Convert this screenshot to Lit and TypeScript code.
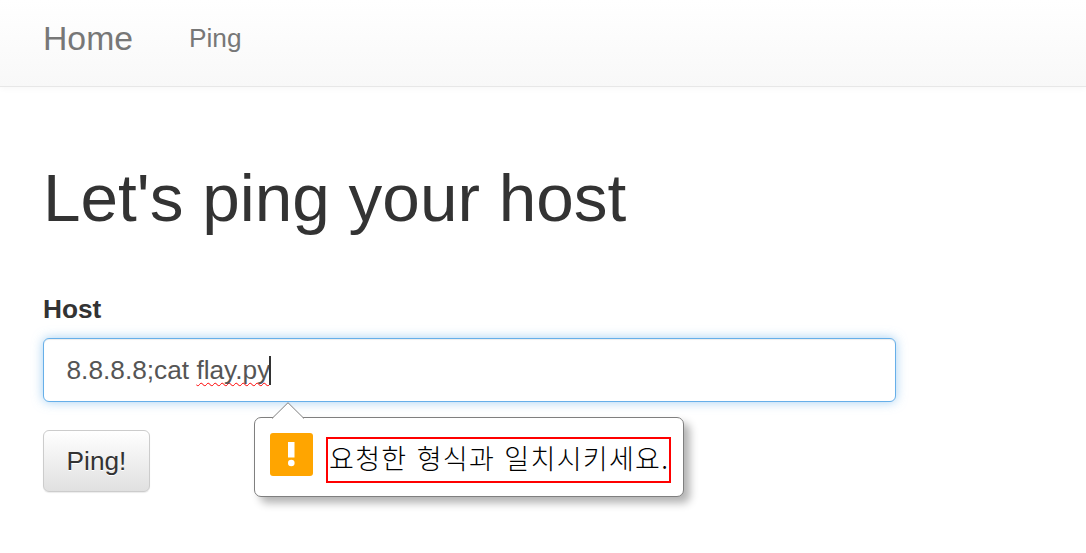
import { LitElement, html, css } from "lit";
import { customElement } from "lit/decorators.js";

@customElement("app-root")
export class AppRoot extends LitElement {
  static styles = css`
    :host {
      display: block;
      height: 553px;
      overflow: hidden;
      background: #fff;
      font-family: "Liberation Sans", Arial, sans-serif;
      color: #333;
    }
    .navbar {
      display: flex;
      align-items: center;
      box-sizing: border-box;
      height: 87px;
      padding: 0 0 10px 43px;
      background: linear-gradient(to bottom, #fff, #f8f8f8);
      border-bottom: 1px solid #e7e7e7;
      box-shadow: 0 1px 7px rgba(0, 0, 0, 0.04);
      color: #777;
    }
    .brand {
      font-size: 33.75px;
      margin-right: 56px;
    }
    .link {
      font-size: 26.25px;
    }
    .content {
      padding: 0 43px;
    }
    h1 {
      margin: 0;
      padding-top: 67px;
      font-size: 67.5px;
      line-height: 88px;
      font-weight: 400;
    }
    label {
      display: block;
      margin-top: 51px;
      font-size: 26.25px;
      line-height: 32px;
      font-weight: 700;
    }
    .field {
      position: relative;
      width: 853px;
      margin-top: 13px;
    }
    .input {
      box-sizing: border-box;
      height: 64px;
      padding: 0 23px 0 22.5px;
      display: flex;
      align-items: center;
      background: #fff;
      border: 1px solid #66afe9;
      border-radius: 6px;
      box-shadow: inset 0 1px 1px rgba(0, 0, 0, 0.075),
        0 0 11px rgba(102, 175, 233, 0.6);
      font-size: 26.25px;
      color: #555;
      white-space: pre;
    }
    .typo {
      text-decoration: underline wavy #f00 1px;
      text-decoration-skip-ink: none;
      text-underline-offset: 3px;
    }
    .caret {
      width: 2px;
      height: 29px;
      margin-left: -1px;
      background: #333;
    }
    button {
      display: block;
      box-sizing: border-box;
      width: 107px;
      height: 62px;
      margin-top: 28px;
      padding: 0;
      border: 1px solid #ccc;
      border-radius: 6px;
      background: linear-gradient(to bottom, #fff, #e0e0e0);
      box-shadow: 0 1px 1px rgba(0, 0, 0, 0.08);
      font: inherit;
      font-size: 26.25px;
      color: #333;
      text-shadow: 0 1px 0 #fff;
    }
    .bubble {
      position: absolute;
      left: 211px;
      top: 79px;
      box-sizing: border-box;
      width: 430px;
      height: 80px;
      display: flex;
      align-items: flex-start;
      padding: 15px 12px 0 15px;
      background: #fff;
      border: 1px solid #7f7f7f;
      border-radius: 7px;
      box-shadow: 6px 6px 8px rgba(0, 0, 0, 0.3);
    }
    .arrow {
      position: absolute;
      left: 17px;
      top: -16px;
      display: block;
    }
    .warn {
      flex: none;
      width: 43px;
      height: 43px;
      display: block;
    }
    .msg {
      box-sizing: border-box;
      width: 345px;
      height: 46px;
      margin: 4px 0 0 13px;
      border: 2px solid #f00;
      font-family: "Noto Sans CJK KR", "Liberation Sans", sans-serif;
      font-size: 27px;
      font-weight: 300;
      line-height: 38px;
      letter-spacing: 1.3px;
      word-spacing: 2px;
      color: #000;
      white-space: nowrap;
      overflow: hidden;
      padding-left: 1px;
    }
  `;

  render() {
    return html`
      <nav class="navbar">
        <span class="brand">Home</span>
        <span class="link">Ping</span>
      </nav>
      <main class="content">
        <h1>Let's ping your host</h1>
        <label>Host</label>
        <div class="field">
          <div class="input">8.8.8.8;cat <span class="typo">flay.py</span><span class="caret"></span></div>
          <div class="bubble">
            <svg class="arrow" width="32" height="17" viewBox="0 0 32 17">
              <path d="M0 16.5 L16 0.7 L32 16.5" fill="#fff" stroke="#7f7f7f" stroke-width="1" />
            </svg>
            <svg class="warn" viewBox="0 0 43 43">
              <rect width="43" height="43" rx="3" fill="#ffa500" />
              <rect x="18" y="9" width="6.5" height="15.5" fill="#fff" />
              <circle cx="21.3" cy="30" r="3.3" fill="#fff" />
            </svg>
            <div class="msg">요청한 형식과 일치시키세요.</div>
          </div>
        </div>
        <button>Ping!</button>
      </main>
    `;
  }
}
